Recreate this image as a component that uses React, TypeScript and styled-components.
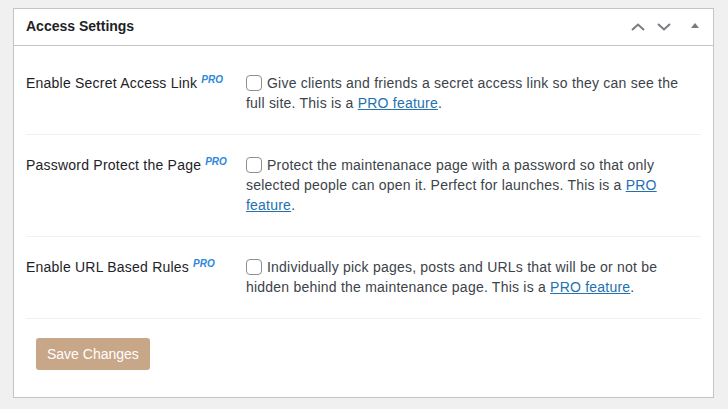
import * as React from 'react';
import styled, { createGlobalStyle } from 'styled-components';

const GlobalStyle = createGlobalStyle`
  html, body {
    margin: 0;
    padding: 0;
    background: #f0f0f1;
    font-family: "Liberation Sans", Arial, sans-serif;
    color: #1d2327;
  }
`;

const Page = styled.div`
  padding: 8px 14px 11px 13px;
`;

const Panel = styled.div`
  background: #fff;
  border: 1px solid #c3c4c7;
`;

const PanelHeader = styled.div`
  display: flex;
  align-items: center;
  height: 36px;
  border-bottom: 1px solid #c3c4c7;
  padding-left: 12px;
`;

const PanelTitle = styled.h2`
  flex: 1;
  margin: 0;
  font-size: 14px;
  font-weight: 700;
  line-height: 1.4;
  color: #1d2327;
`;

const HeaderActions = styled.div`
  display: flex;
  height: 100%;
`;

const IconButton = styled.button<{ $wide?: boolean }>`
  display: flex;
  align-items: center;
  justify-content: center;
  width: ${p => (p.$wide ? '36px' : '26px')};
  height: 100%;
  padding: 0;
  border: 0;
  background: none;
  color: #787c82;
  cursor: pointer;
`;

const PanelBody = styled.div`
  padding: 7px 12px 27px;
`;

const Row = styled.div`
  display: grid;
  grid-template-columns: 220px 1fr;
  padding: 20px 10px 21px 0;
  border-bottom: 1px solid #f0f0f1;
  font-size: 14px;
  line-height: 20px;
  letter-spacing: 0.22px;
`;

const Label = styled.div`
  color: #1d2327;
`;

const Pro = styled.sup`
  position: relative;
  top: 1px;
  margin-left: 4px;
  font-size: 10px;
  font-weight: 700;
  font-style: italic;
  letter-spacing: 0;
  color: #2f87dc;
  vertical-align: super;
  line-height: 0;
`;

const Description = styled.div`
  color: #3c434a;
`;

const Checkbox = styled.span`
  display: inline-block;
  box-sizing: border-box;
  width: 16px;
  height: 16px;
  margin: 0 5px 0 0;
  border: 1px solid #8c8f94;
  border-radius: 4px;
  background: #fff;
  vertical-align: -3px;
`;

const Link = styled.a`
  color: #2271b1;
  text-decoration: underline;
`;

const Submit = styled.div`
  padding: 19px 0 0 10px;
`;

const SaveButton = styled.button`
  height: 32px;
  padding: 0 11px;
  border: 0;
  border-radius: 3px;
  background: #c8a688;
  color: #fff;
  font-family: inherit;
  font-size: 14px;
  line-height: 32px;
`;

const ChevronUp = () => (
  <svg width="14" height="8" viewBox="0 0 14 8" fill="none">
    <path d="M1 7L7 1.5L13 7" stroke="currentColor" strokeWidth="2" />
  </svg>
);

const ChevronDown = () => (
  <svg width="14" height="8" viewBox="0 0 14 8" fill="none">
    <path d="M1 1L7 6.5L13 1" stroke="currentColor" strokeWidth="2" />
  </svg>
);

const Triangle = () => (
  <svg width="8" height="5" viewBox="0 0 8 5" style={{ marginTop: -4 }}>
    <path d="M4 0L8 5H0Z" fill="currentColor" />
  </svg>
);

const settings = [
  {
    label: 'Enable Secret Access Link',
    text: 'Give clients and friends a secret access link so they can see the full site. This is a ',
  },
  {
    label: 'Password Protect the Page',
    text: 'Protect the maintenanace page with a password so that only selected people can open it. Perfect for launches. This is a ',
  },
  {
    label: 'Enable URL Based Rules',
    text: 'Individually pick pages, posts and URLs that will be or not be hidden behind the maintenance page. This is a ',
  },
];

export default function App() {
  return (
    <>
      <GlobalStyle />
      <Page>
        <Panel>
          <PanelHeader>
            <PanelTitle>Access Settings</PanelTitle>
            <HeaderActions>
              <IconButton><ChevronUp /></IconButton>
              <IconButton><ChevronDown /></IconButton>
              <IconButton $wide><Triangle /></IconButton>
            </HeaderActions>
          </PanelHeader>
          <PanelBody>
            {settings.map(s => (
              <Row key={s.label}>
                <Label>
                  {s.label}<Pro>PRO</Pro>
                </Label>
                <Description>
                  <Checkbox />
                  {s.text}
                  <Link href="#">PRO feature</Link>.
                </Description>
              </Row>
            ))}
            <Submit>
              <SaveButton>Save Changes</SaveButton>
            </Submit>
          </PanelBody>
        </Panel>
      </Page>
    </>
  );
}
